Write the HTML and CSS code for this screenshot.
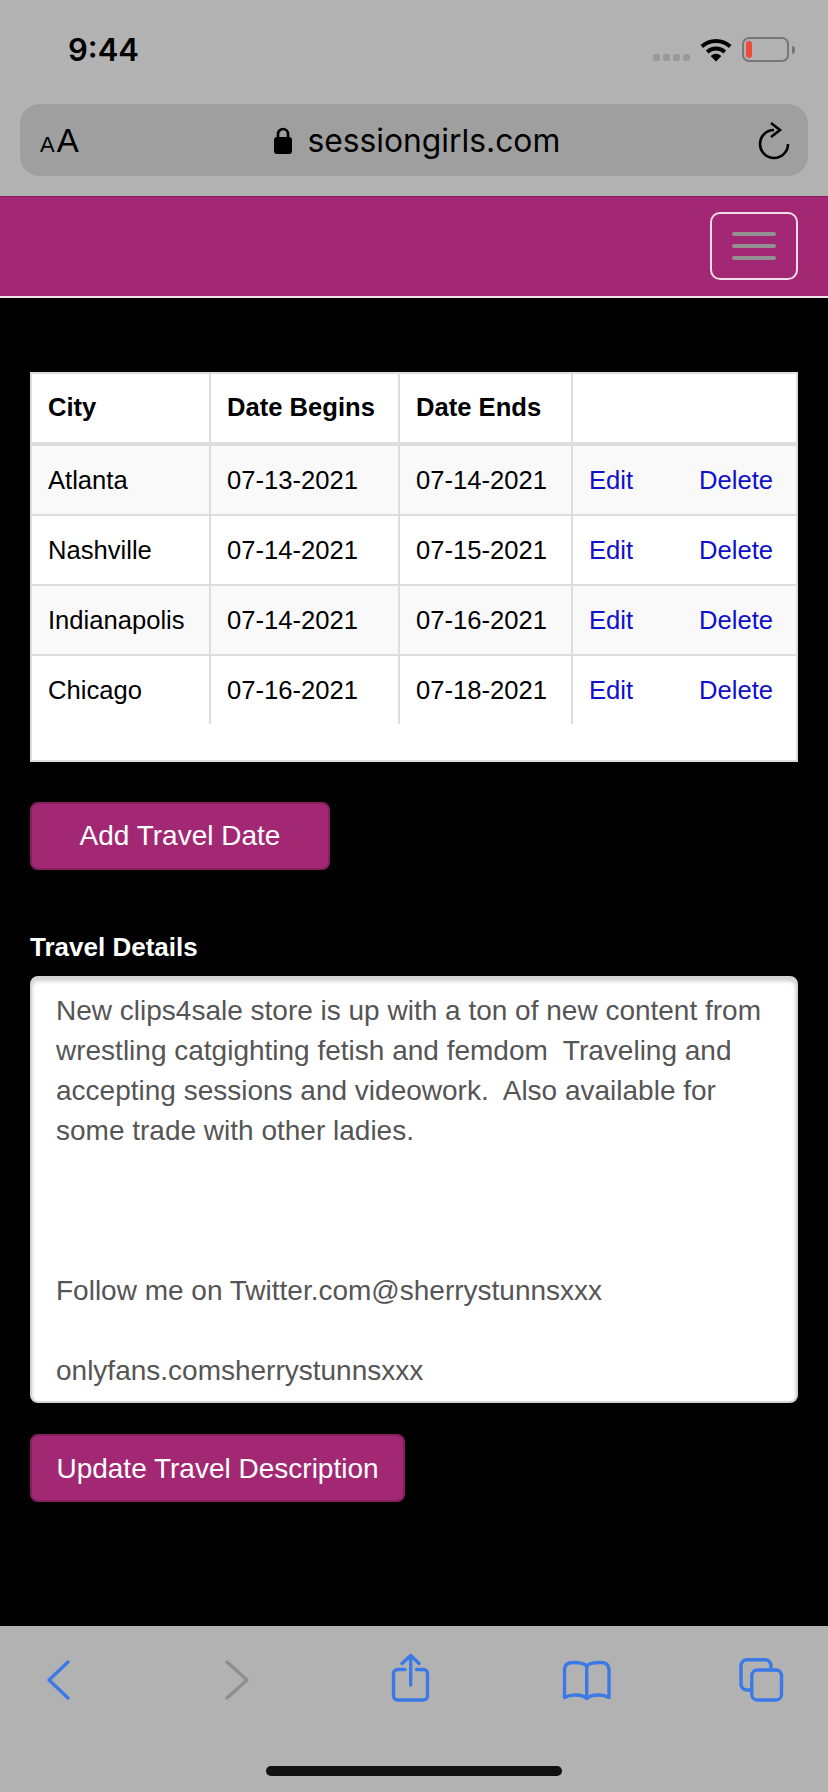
FILE: index.html
```html
<!DOCTYPE html><html lang="en">
<head>
  <meta charset="UTF-8">
  <meta name="viewport" content="width=device-width, initial-scale=1.0">
  <title>Travel Dates - sessiongirls.com</title>
  <link rel="stylesheet" href="styles.css">
</head>
<body>
  <div class="phone">
    <header class="browser-top">
      <div class="status-bar">
        <span class="clock">9:44</span>
        <div class="status-icons">
          <div class="signal"><i></i><i></i><i></i><i></i></div>
          <svg class="wifi" width="32" height="25" viewBox="0 0 32 25">
            <path d="M1.8 9.5A21 21 0 0 1 30.2 9.5M7.2 15A13 13 0 0 1 24.8 15" fill="none" stroke="#000" stroke-width="4"/>
            <path d="M16 24.5L10.6 19Q16 14.6 21.4 19Z" fill="#000"/>
          </svg>
          <div class="battery"><div class="battery-level"></div></div>
          <div class="battery-nub"></div>
        </div>
      </div>
      <div class="address-bar">
        <div class="text-size"><span class="small-a">A</span><span class="big-a">A</span></div>
        <div class="site">
          <svg width="18" height="27" viewBox="0 0 18 27">
            <path d="M4 11V7a5 5 0 0 1 10 0V11" fill="none" stroke="#000" stroke-width="2.6"/>
            <rect x="0" y="10" width="18" height="17" rx="3" fill="#000"/>
          </svg>
          <span>sessiongirls.com</span>
        </div>
        <svg class="reload" width="36" height="40" viewBox="0 0 36 40">
          <path d="M18 10A14 14 0 1 0 32 24" fill="none" stroke="#000" stroke-width="2.6"/>
          <path d="M15 3L24 10L15 17" fill="none" stroke="#000" stroke-width="2.6"/>
        </svg>
      </div>
    </header>

    <nav class="navbar">
      <button class="menu-toggle"><i></i><i></i><i></i></button>
    </nav>

    <main class="content">
      <div class="table-wrap">
        <table class="travel-table">
          <colgroup>
            <col class="col-city"><col class="col-begin"><col class="col-end"><col>
          </colgroup>
          <thead>
            <tr><th>City</th><th>Date Begins</th><th>Date Ends</th><th></th></tr>
          </thead>
          <tbody>
            <tr>
              <td>Atlanta</td><td>07-13-2021</td><td>07-14-2021</td>
              <td><a class="edit" href="#">Edit</a><a href="#">Delete</a></td>
            </tr>
            <tr>
              <td>Nashville</td><td>07-14-2021</td><td>07-15-2021</td>
              <td><a class="edit" href="#">Edit</a><a href="#">Delete</a></td>
            </tr>
            <tr>
              <td>Indianapolis</td><td>07-14-2021</td><td>07-16-2021</td>
              <td><a class="edit" href="#">Edit</a><a href="#">Delete</a></td>
            </tr>
            <tr>
              <td>Chicago</td><td>07-16-2021</td><td>07-18-2021</td>
              <td><a class="edit" href="#">Edit</a><a href="#">Delete</a></td>
            </tr>
          </tbody>
        </table>
      </div>

      <button class="btn btn-add">Add Travel Date</button>

      <label class="details-label" for="details">Travel Details</label>
      <textarea class="details" id="details">New clips4sale store is up with a ton of new content from wrestling catgighting fetish and femdom  Traveling and accepting sessions and videowork.  Also available for some trade with other ladies.



Follow me on Twitter.com@sherrystunnsxxx

onlyfans.comsherrystunnsxxx</textarea>

      <button class="btn btn-update">Update Travel Description</button>
    </main>

    <footer class="browser-bottom">
      <div class="toolbar">
        <svg class="tool" viewBox="0 0 60 60"><path d="M40 12L21 30L40 48"/></svg>
        <svg class="tool tool-off" viewBox="0 0 60 60"><path d="M23 12L43 30L23 48"/></svg>
        <svg class="tool" viewBox="0 0 60 60">
          <path d="M25 19.500H17.500a4 4 0 0 0-4 4V46a4 4 0 0 0 4 4H43.500a4 4 0 0 0 4-4V23.500a4 4 0 0 0-4-4H36.500"/>
          <path d="M30.700 35V6.500M22 13.500L30.700 5.500L39 13.500"/>
        </svg>
        <svg class="tool" viewBox="0 0 60 60">
          <path d="M8.500 47.500V20C8.500 14 12 12.500 17 12.500C24 12.500 29 13 30.700 16.500C32.500 13 37.500 12.500 44.500 12.500C49.500 12.500 53 14 53 20V47.500C47 44 36 44 30.700 48.500C25.500 44 14.500 44 8.500 47.500Z"/>
          <path d="M30.700 16.500V48"/>
        </svg>
        <svg class="tool" viewBox="0 0 60 60">
          <path d="M18 40H15a6 6 0 0 1-6-6V15.700a6 6 0 0 1 6-6H33a6 6 0 0 1 6 6V20"/>
          <rect x="19.800" y="20" width="29.700" height="30" rx="5.500"/>
        </svg>
      </div>
      <div class="home-indicator"></div>
    </footer>
  </div>
</body>
</html>
```

FILE: styles.css
```css
* {
  box-sizing: border-box;
}
body {
  margin: 0;
  background: #000;
  font-family: "Liberation Sans", Arial, sans-serif;
}
.phone {
  width: 828px;
  height: 1792px;
  display: flex;
  flex-direction: column;
  overflow: hidden;
}

/* browser chrome, top */
.browser-top {
  height: 196px;
  padding: 0 20px;
  background: #b2b2b2;
}
.status-bar {
  height: 104px;
  display: flex;
  justify-content: space-between;
  padding: 30px 13px 0 48px;
}
.clock {
  font-family: Inter, sans-serif;
  font-weight: 600;
  font-size: 31px;
  line-height: 39px;
  color: #000;
}
.status-icons {
  display: flex;
  align-items: flex-start;
  padding-top: 7px;
}
.signal {
  display: flex;
  gap: 3px;
  margin-top: 17px;
  margin-right: 10px;
}
.signal i {
  width: 7px;
  height: 7px;
  border-radius: 2px;
  background: #999;
}
.battery {
  width: 47px;
  height: 25px;
  margin-left: 10px;
  padding: 2px;
  border: 2px solid #777;
  border-radius: 7px;
}
.battery-level {
  width: 6px;
  height: 17px;
  border-radius: 3px;
  background: #ef4b3a;
}
.battery-nub {
  width: 3px;
  height: 8px;
  margin: 9px 0 0 3px;
  border-radius: 0 3px 3px 0;
  background: #777;
}
.address-bar {
  height: 72px;
  display: flex;
  align-items: center;
  justify-content: space-between;
  padding: 0 16px 0 20px;
  border-radius: 20px;
  background: #9f9f9f;
}
.text-size {
  display: flex;
  align-items: baseline;
  gap: 2px;
  color: #000;
  margin-top: 2px;
}
.small-a {
  font-size: 22px;
}
.big-a {
  font-size: 33px;
}
.site {
  display: flex;
  align-items: center;
  gap: 15px;
  font-family: Inter, sans-serif;
  font-size: 31.8px;
  color: #000;
}
.reload {
  display: block;
}

/* site nav */
.navbar {
  height: 102px;
  display: flex;
  justify-content: flex-end;
  padding: 15px 30px 0 0;
  background: #a32873;
  border-top: 1px solid #85205e;
  border-bottom: 2px solid #f3e3ed;
}
.menu-toggle {
  width: 88px;
  height: 68px;
  display: flex;
  flex-direction: column;
  align-items: center;
  justify-content: center;
  gap: 8px;
  padding: 0;
  background: transparent;
  border: 2px solid #f3dcea;
  border-radius: 10px;
}
.menu-toggle i {
  width: 44px;
  height: 4px;
  border-radius: 2px;
  background: #949094;
}

/* page */
.content {
  flex: 1;
  padding: 74px 30px 0;
  background: #000;
}
.table-wrap {
  padding-bottom: 36px;
  background: #fff;
  border: 2px solid #ddd;
}
.travel-table {
  width: 100%;
  table-layout: fixed;
  border-spacing: 0;
  font-size: 25.6px;
  line-height: 36px;
  color: #000;
}
.col-city {
  width: 179px;
}
.col-begin {
  width: 189px;
}
.col-end {
  width: 173px;
}
.travel-table th,
.travel-table td {
  padding: 16px;
  text-align: left;
  white-space: nowrap;
  border-right: 2px solid #ddd;
  border-bottom: 2px solid #ddd;
}
.travel-table th {
  padding: 15px 16px 17px;
  border-bottom-width: 4px;
}
.travel-table th:last-child,
.travel-table td:last-child {
  border-right: none;
}
.travel-table tbody tr:nth-child(odd) {
  background: #f9f9f9;
}
.travel-table tbody tr:last-child td {
  border-bottom: none;
}
.travel-table a {
  color: #0f0fcc;
  text-decoration: none;
}
.travel-table .edit {
  display: inline-block;
  width: 110px;
}
.btn {
  display: block;
  height: 68px;
  font-family: inherit;
  font-size: 28px;
  color: #fff;
  background: #a32873;
  border: 2px solid #85205e;
  border-radius: 8px;
}
.btn-add {
  width: 300px;
  margin-top: 40px;
  padding: 0;
}
.btn-update {
  width: 375px;
  margin-top: 31px;
  padding: 2px 0 0;
}
.details-label {
  display: block;
  margin-top: 59px;
  font-size: 26px;
  line-height: 36px;
  font-weight: bold;
  color: #fff;
}
.details {
  display: block;
  width: 768px;
  height: 427px;
  margin-top: 11px;
  padding: 13px 24px 0;
  font-family: inherit;
  font-size: 28px;
  line-height: 40px;
  color: #555;
  background: #fff;
  border: 2px solid #d4d4d4;
  border-radius: 8px;
  box-shadow: inset 0 3px 4px rgba(0, 0, 0, .2);
  resize: none;
  overflow: hidden;
}

/* browser chrome, bottom */
.browser-bottom {
  height: 166px;
  background: #b2b2b2;
}
.toolbar {
  display: flex;
  gap: 116px;
  padding: 24px 0 0 28px;
}
.tool {
  display: block;
  width: 60px;
  height: 60px;
  fill: none;
  stroke: #3b7ae6;
  stroke-width: 3.4;
  stroke-linecap: round;
  stroke-linejoin: round;
}
.tool-off {
  stroke: #8e8e8e;
}
.home-indicator {
  width: 296px;
  height: 10px;
  margin: 56px auto 0;
  border-radius: 5px;
  background: #111;
}
```
